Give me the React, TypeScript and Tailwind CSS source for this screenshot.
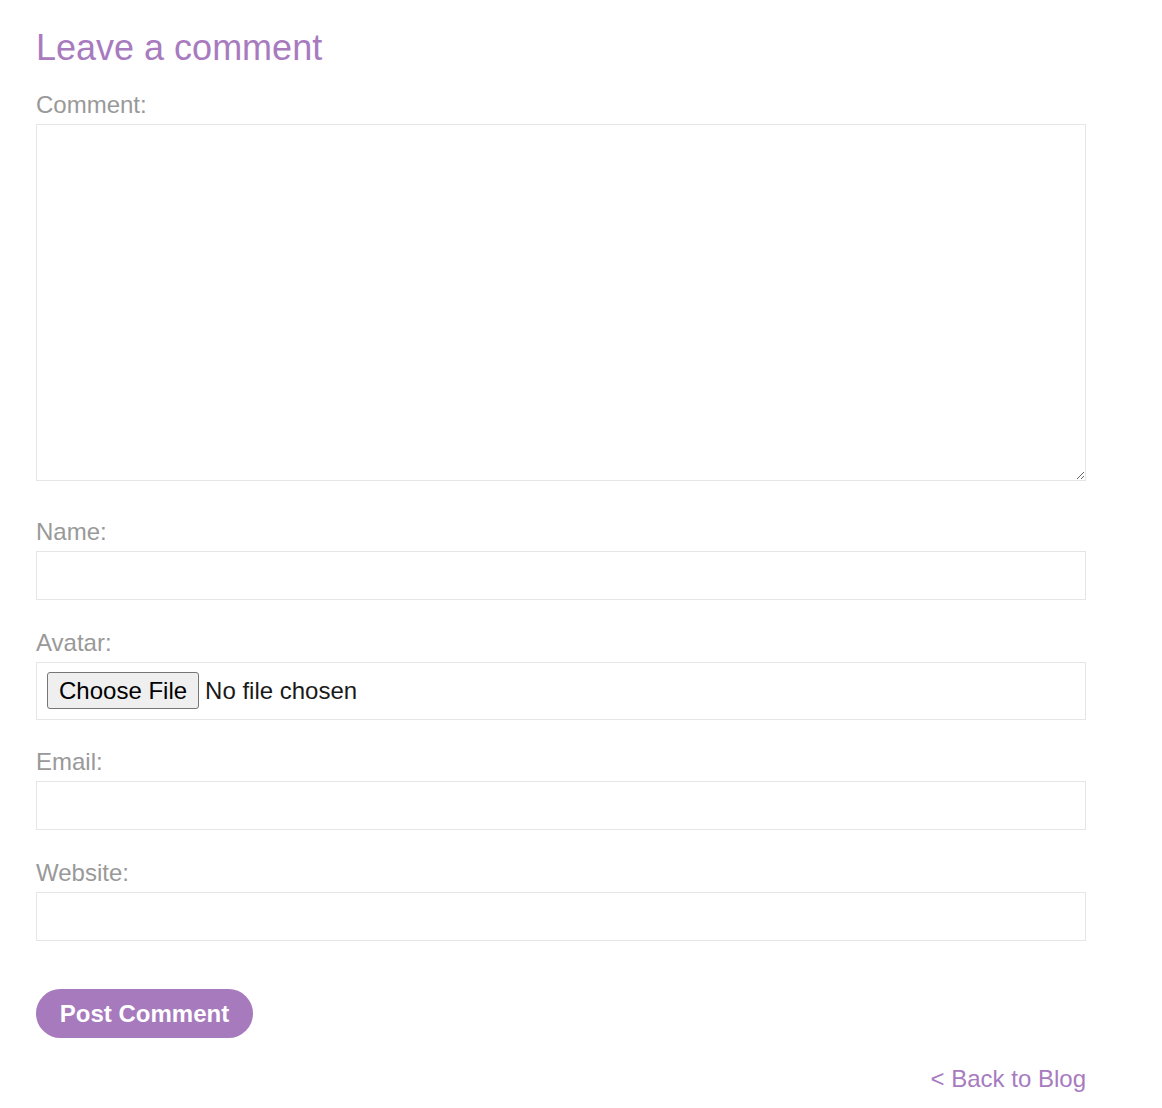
export default function App() {
  const labelCls = 'block h-[28px] mb-[5px] leading-[28px] text-[24px] text-[#999999]';
  const inputCls = 'block w-full h-[49px] border border-[#e6e6e6] bg-white px-3 text-[24px] outline-none';

  return (
    <div className="min-h-screen bg-white font-['Liberation_Sans',Arial,sans-serif]">
      <div className="w-[1050px] ml-[36px] pt-[28px]">
        <h2 className="h-[40px] leading-[40px] text-[36px] font-normal text-[#a87bbf] mb-[23px]">
          Leave a comment
        </h2>

        <form onSubmit={e => e.preventDefault()}>
          <label className={labelCls}>Comment:</label>
          <textarea className="block w-full h-[357px] border border-[#e6e6e6] bg-white p-2 text-[24px] outline-none resize" />

          <label className={`${labelCls} mt-[37px]`}>Name:</label>
          <input type="text" className={inputCls} />

          <label className={`${labelCls} mt-[29px]`}>Avatar:</label>
          <div className="flex items-center h-[58px] border border-[#e6e6e6] pl-[10px] pb-[1px]">
            <input
              type="file"
              className="text-[24px] text-[#1a1a1a] file:h-[37px] file:px-[11px] file:mr-[6px] file:border file:border-[#767676] file:bg-[#efefef] file:rounded-[3px] file:text-black file:text-[24px]"
            />
          </div>

          <label className={`${labelCls} mt-[28px]`}>Email:</label>
          <input type="email" className={inputCls} />

          <label className={`${labelCls} mt-[29px]`}>Website:</label>
          <input type="text" className={inputCls} />

          <button
            type="submit"
            className="mt-[48px] w-[217px] h-[49px] rounded-full bg-[#a67abd] text-white text-[24px] font-bold"
          >
            Post Comment
          </button>
        </form>

        <div className="flex justify-end mt-[25px]">
          <a href="#" className="text-[24px] leading-[32px] text-[#a87bbf]">
            &lt; Back to Blog
          </a>
        </div>
      </div>
    </div>
  );
}
